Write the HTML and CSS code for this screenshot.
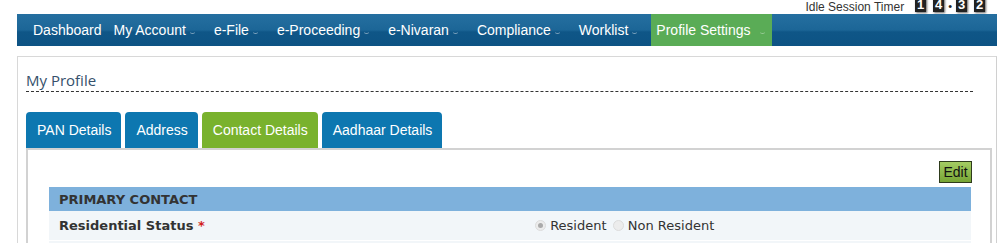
FILE: index.html
```html
<!DOCTYPE html>
<html lang="en">

<head>
    <meta charset="UTF-8">
    <meta name="viewport" content="width=device-width, initial-scale=1.0">
    <title>My Profile</title>
    <link rel="stylesheet" href="styles.css">
</head>

<body>

    <div class="wrapper">
        <div class="topbar">
            <div class="timer">
                <span class="timer-label">Idle Session Timer</span>
                <span class="digit">1</span>
                <span class="digit">4</span>
                <span class="sep">&bull;</span>
                <span class="digit">3</span>
                <span class="digit">2</span>
            </div>
        </div>

        <ul class="nav">
            <li><a href="#">Dashboard</a></li>
            <li><a href="#">My Account<span class="caret"></span></a></li>
            <li><a href="#">e-File<span class="caret"></span></a></li>
            <li><a href="#">e-Proceeding<span class="caret"></span></a></li>
            <li><a href="#">e-Nivaran<span class="caret"></span></a></li>
            <li><a href="#">Compliance<span class="caret"></span></a></li>
            <li><a href="#">Worklist<span class="caret"></span></a></li>
            <li class="active"><a href="#">Profile Settings<span class="caret"></span></a></li>
        </ul>

        <div class="content">
            <h2 class="page-title">My Profile</h2>

            <div class="tabs">
                <a href="#" class="tab">PAN Details</a>
                <a href="#" class="tab">Address</a>
                <a href="#" class="tab active">Contact Details</a>
                <a href="#" class="tab">Aadhaar Details</a>
            </div>

            <div class="panel">
                <div class="actions">
                    <button class="edit-btn">Edit</button>
                </div>
                <table class="details">
                    <tr class="head">
                        <th colspan="2">PRIMARY CONTACT</th>
                    </tr>
                    <tr>
                        <td class="label">Residential Status <span class="req">*</span></td>
                        <td class="value">
                            <span class="radio checked"></span> Resident
                            <span class="radio"></span> Non Resident
                        </td>
                    </tr>
                    <tr>
                        <td class="label">&nbsp;</td>
                        <td class="value">&nbsp;</td>
                    </tr>
                </table>
            </div>
        </div>
    </div>

</body>

</html>
```

FILE: styles.css
```css
body {
    margin: 0;
    background: #fff;
    font-family: "Liberation Sans", Arial, sans-serif;
    overflow: hidden;
}

.wrapper {
    width: 980px;
    margin-left: 17px;
}

/* idle timer, only the bottom of it shows */
.topbar {
    height: 14px;
    overflow: hidden;
    display: flex;
    justify-content: flex-end;
}

.timer {
    display: flex;
    align-items: flex-end;
    height: 12px;
    margin-right: 12px;
    font-size: 12px;
    color: #333;
}

.timer-label {
    line-height: 14px;
    margin-right: 4px;
    margin-bottom: -2px;
}

.timer .digit {
    display: inline-block;
    width: 11px;
    height: 16px;
    margin-left: 7px;
    background: #222;
    color: #fff;
    font-weight: bold;
    font-size: 13px;
    line-height: 18px;
    text-align: center;
    box-shadow: 1px 1px 2px #666;
}

.timer .sep {
    font-size: 11px;
    line-height: 12px;
    margin-left: 4px;
    margin-right: -3px;
    color: #222;
}

/* main menu */
.nav {
    list-style: none;
    margin: 0;
    padding: 0 0 0 10px;
    height: 32px;
    display: flex;
    background: linear-gradient(#256fa0 0%, #1c6697 50%, #0f5687 56%, #0d5384 100%);
}

.nav li a {
    display: flex;
    align-items: center;
    height: 32px;
    padding: 0 6px;
    color: #fff;
    text-decoration: none;
    font-size: 14px;
    white-space: nowrap;
}

.nav li.active {
    margin-left: 1px;
}

.nav li.active a {
    background: #5aac56;
    padding: 0 7px 0 5px;
}

.caret {
    display: inline-block;
    width: 5px;
    height: 3px;
    margin: 4px 7px 0 4px;
    border-bottom: 1px solid rgba(255, 255, 255, 0.45);
    border-radius: 0 0 3px 3px;
}

.nav li.active .caret {
    margin-right: 0;
    margin-left: 9px;
    border-color: rgba(255, 255, 255, 0.35);
}

/* page box */
.content {
    margin-top: 10px;
    border: 1px solid #d8d8d8;
    border-right-color: #d0d0d0;
    padding: 0 0 0 8px;
    height: 200px;
}

.page-title {
    margin: 14px 23px 0 0;
    padding: 0 0 2px 0;
    font-family: "Open Sans", sans-serif;
    font-weight: normal;
    font-size: 15px;
    line-height: 18px;
    color: #35506b;
    border-bottom: 1px dashed #333;
}

.tabs {
    display: flex;
    gap: 4px;
    margin-top: 20px;
}

.tab {
    display: block;
    height: 36px;
    line-height: 36px;
    padding: 0 10px 0 11px;
    background: #0d77b0;
    color: #fff;
    font-size: 14px;
    text-decoration: none;
    border-radius: 4px 4px 0 0;
}

.tab.active {
    background: #79b22d;
}

.panel {
    width: 962px;
    border: 2px solid #d2d2d2;
    border-bottom: 0;
    height: 100px;
}

.actions {
    display: flex;
    justify-content: flex-end;
    padding: 11px 18px 4px 0;
}

.edit-btn {
    height: 22px;
    width: 33px;
    padding: 0;
    border: 1px solid #2e3b1c;
    background: linear-gradient(#a4cc63, #77a535);
    color: #111;
    font-family: "Liberation Sans", Arial, sans-serif;
    font-size: 14px;
}

.details {
    margin-left: 21px;
    width: 922px;
    border-collapse: collapse;
    font-family: "DejaVu Sans", Verdana, sans-serif;
    font-size: 13px;
    color: #333;
}

.details .head th {
    background: #7eb1dc;
    height: 24px;
    padding: 0 10px;
    text-align: left;
    font-weight: bold;
}

.details td {
    background: #f2f6f9;
    height: 29px;
    border-bottom: 1px solid #fff;
    padding: 0 10px;
}

.details td.label {
    width: 464px;
    font-weight: bold;
}

.details td.value {
    padding-left: 0;
}

.req {
    color: #d21f1f;
}

.radio {
    display: inline-block;
    width: 9px;
    height: 9px;
    border: 1px solid #dcdcdc;
    border-radius: 50%;
    background: #ececec;
    vertical-align: -1px;
    position: relative;
    margin-left: 2px;
}

.radio.checked::after {
    content: '';
    position: absolute;
    left: 2px;
    top: 2px;
    width: 5px;
    height: 5px;
    border-radius: 50%;
    background: #aaa;
}
```
